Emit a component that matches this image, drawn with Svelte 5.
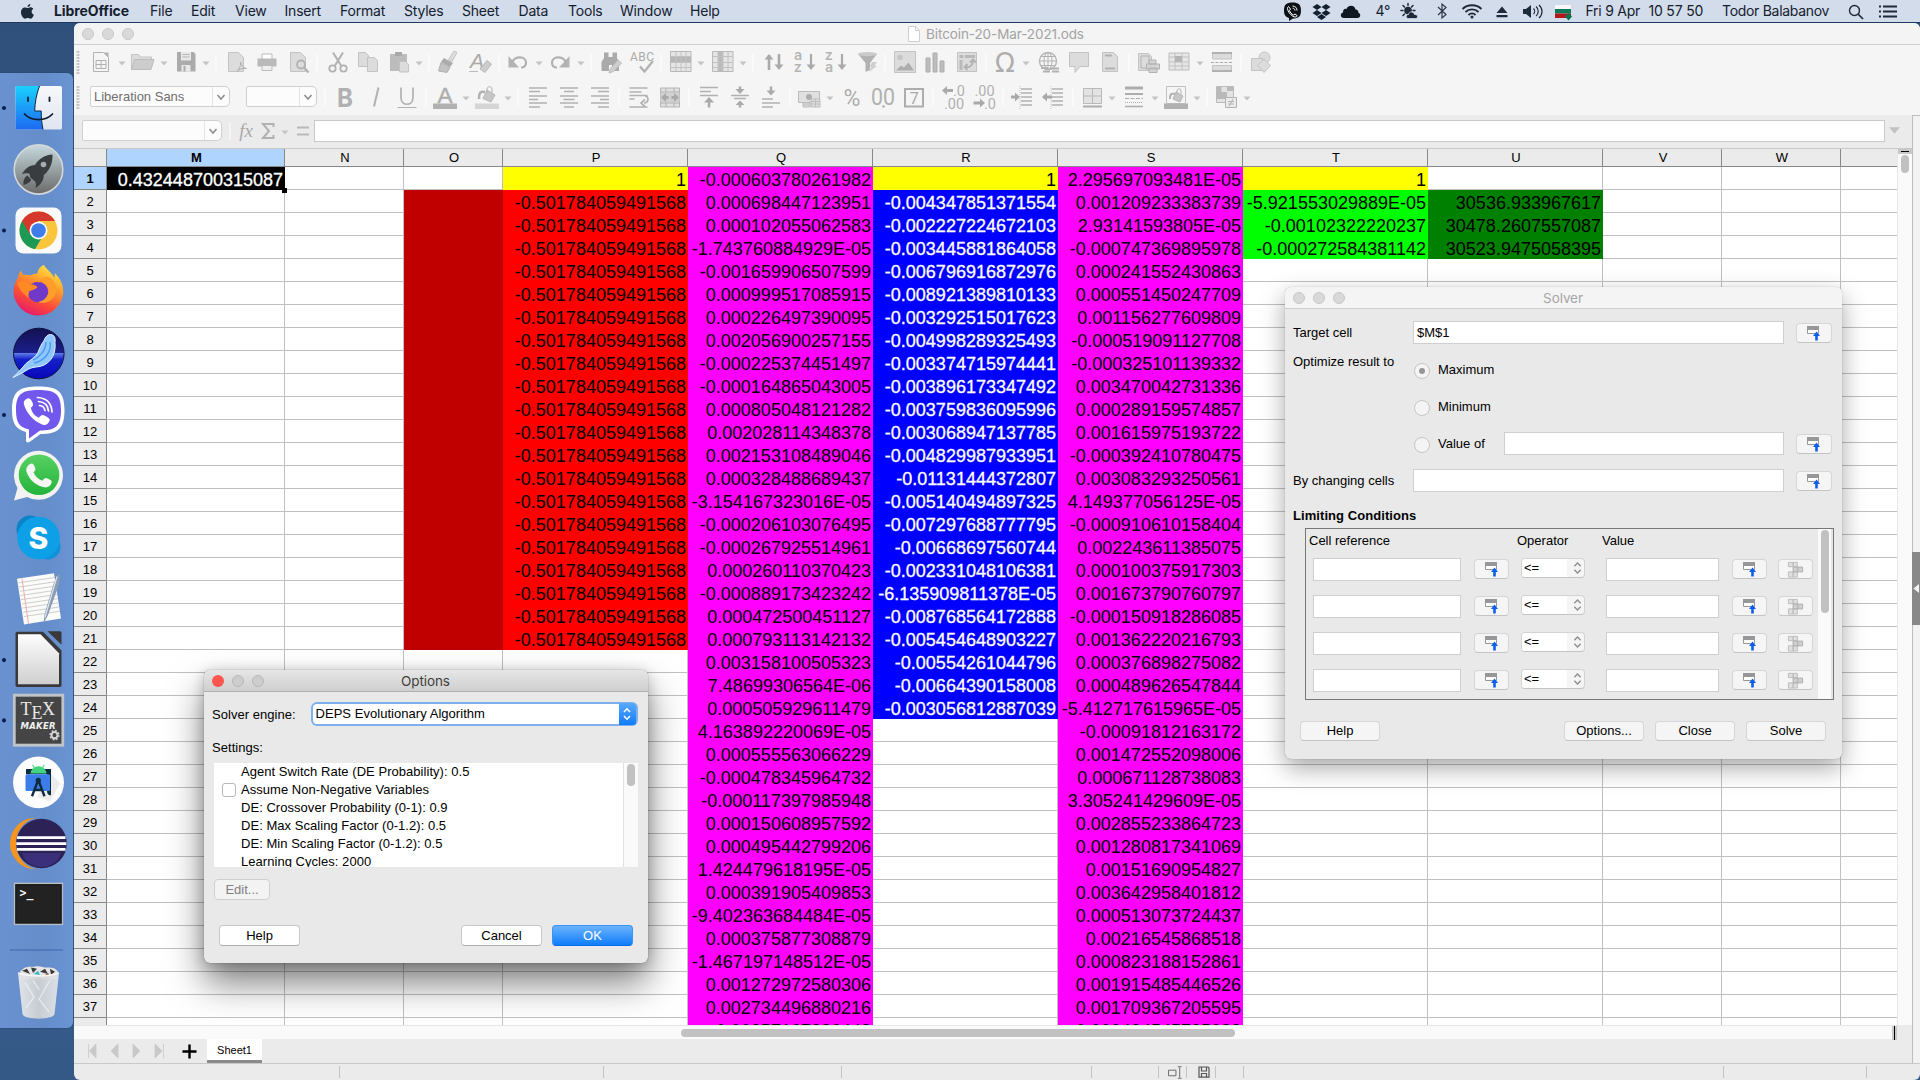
<script>
  // ---------- Menu bar ----------
  const menus = [
    ['File', 41], ['Edit', 44], ['View', 49.5], ['Insert', 55.5], ['Format', 64], ['Styles', 58],
    ['Sheet', 56.5], ['Data', 49.5], ['Tools', 52], ['Window', 70], ['Help', 40]
  ];

  // ---------- Dock: each entry is a slot [top, bottom, running indicator y, artwork, vertical scale] ----------
  const tall = 1.0523;
  const dock = [
    [73, 138, 108, `<defs><linearGradient id="fb" x1="0" y1="0" x2="0" y2="1"><stop offset="0" stop-color="#1ad0fd"/><stop offset="1" stop-color="#1d6af2"/></linearGradient><linearGradient id="fw" x1="0" y1="0" x2="0" y2="1"><stop offset="0" stop-color="#f7f8fb"/><stop offset="1" stop-color="#dfe6f0"/></linearGradient></defs><rect x="15.500" y="86" width="46.500" height="43.500" rx="1.500" fill="url(#fw)"/><path d="M17 86h22.500c-3 8-4.500 16-4.800 25h6.500c0 7 .5 12 1.800 18.500H17a1.500 1.500 0 0 1-1.500-1.500V87.500A1.500 1.500 0 0 1 17 86z" fill="url(#fb)"/><path d="M39.500 86c-3 8-4.500 16-4.800 25h6.500c0 7 .5 12 1.800 18.500" fill="none" stroke="#10263f" stroke-width="1"/><path d="M28 97.500v3.500M49.500 97.500v3.500" stroke="#0d1b2c" stroke-width="1.800" stroke-linecap="round"/><path d="M24.500 114c7 7.500 21 7.500 28 0" fill="none" stroke="#0d1b2c" stroke-width="1.700" stroke-linecap="round"/>`],
    [138, 200, 0, `<defs><linearGradient id="lp" x1="0" y1="0" x2="0" y2="1"><stop offset="0" stop-color="#c5d9de"/><stop offset="1" stop-color="#6b6a69"/></linearGradient></defs><ellipse cx="38.500" cy="169.500" rx="24.300" ry="24.600" fill="url(#lp)" stroke="#d3d7d9" stroke-width="1.600"/><path d="M52.500 154.500c-8 .5-14 4.500-17.500 10.500-4 .2-8.500 1.500-13 9 3-.8 5-1 7.500-.2l.8 3.700 4.500 3.800c2 3 1.200 4.800.5 6.700 6-3.500 8.500-8 8.500-13 6-4.500 9-12 8.700-20.500z" fill="#3a3d40"/><circle cx="43.500" cy="164.500" r="2.800" fill="#a5adb0"/><path d="M27.500 175.500c-3 1.500-4.500 5-4 9.500 3.500-1 6.300-2.500 7.800-5z" fill="#3a3d40"/>`],
    [200, 259, 230.5, `<rect x="15.500" y="207.500" width="46" height="46" rx="8" fill="#fafafa"/><circle cx="38.500" cy="230.500" r="19" fill="#fbc43d"/><path d="M38.500 230.500L22 221a19 19 0 0 0 13 28.200l8-13.500z" fill="#1c9a55"/><path d="M38.500 221h16.500a19 19 0 0 0-33 0l8.500 14z" fill="#d5382c"/><circle cx="38.500" cy="230.500" r="9" fill="#fff"/><circle cx="38.500" cy="230.500" r="7.300" fill="#3f7de8"/>`],
    [259, 322, 0, `<defs><linearGradient id="ff" x1=".8" y1="0" x2=".3" y2="1"><stop offset="0" stop-color="#fff04a"/><stop offset=".35" stop-color="#ffa02c"/><stop offset=".7" stop-color="#fb4a38"/><stop offset="1" stop-color="#e51a6d"/></linearGradient></defs><path d="M44 265c2 4 8 7.500 10.500 13 .5-2 .2-3.500 0-5 6 5 9 12.500 8.800 19.500A25 25 0 0 1 13.500 293c0-6 1.500-11.500 4.500-15.500.3-3 1.300-5 3-7 .5 2 1.500 3.500 3 4.500 2-.3 4-.2 6 .6 2-1.500 5-2.300 7.500-2.200.2-3.500 2.500-7 6.500-8.400z" fill="url(#ff)"/><circle cx="38" cy="292" r="10.300" fill="#7139ca"/><path d="M17.500 283c5-3 8-1.500 12 1.500 3 0 5.500 0 8 2.500-2 3-6 3-8.500 4.500 0 2-1 4-.5 6.500-5-4-10-9-11-15z" fill="#ff8a24"/><path d="M38 283c4-3 9-1 10.500 4 1.500 7-3 14-10.500 15 8 3 17-2 18-11 .7-6-2-12-8-14-5-1-9 2-10 6z" fill="#ff9d2b"/>`],
    [322, 384, 0, `<defs><linearGradient id="sm" x1="0" y1="0" x2="0" y2="1"><stop offset="0" stop-color="#13104f"/><stop offset=".48" stop-color="#1b1f8c"/><stop offset=".5" stop-color="#5b78e8"/><stop offset=".62" stop-color="#1420c8"/><stop offset="1" stop-color="#0707b8"/></linearGradient></defs><circle cx="38.800" cy="353.500" r="25.300" fill="url(#sm)" stroke="#0e1240"/><path d="M50.500 334.500c4.500.5 5 4 4.500 8 1.500 14-7 24-19 24.500-6 .5-9 3-13 5.500l-10 5c5-5 9-9 13-14 5-4 9-6 11.500-10 2-5 3.500-9 6-12 1.500-3 3-7 7-7z" fill="#8fc6fb" stroke="#e3f2ff" stroke-width="1"/><path d="M50 342c2 10-6 19-16 21M46 342c0 8-6 15-13 18" stroke="#4c9af2" stroke-width="1.500" fill="none"/>`],
    [384, 446, 415, `<path d="M38.500 386.500c18 0 26 4 26 23.500s-7 24-24 24l-11 8c-2 1-3.500.5-3.500-2v-8c-10-3-14-8-14-22 0-19.500 8-23.500 26.500-23.500z" fill="#fff"/><path d="M38.500 390c15.500 0 22.500 3 22.500 20s-6.500 20.500-21 20.500l-11 8v-9c-9.500-2-13-7-13-19.500 0-17 7-20 22.500-20z" fill="#7257ec"/><path d="M26.500 399c2.500-1.500 4-.5 6 3.500 1.300 2.600.3 3.700-1.700 5.300 1 4.500 3.500 8 8 10 2.500-3 3.500-3.500 6.500-1.800 3.500 2 5 3 4.300 4.800-1.500 3.700-4.600 5-7.600 3.700-9-4-15.500-11.500-18-20-.7-2.500.2-4.200 2.500-5.500z" fill="#fff"/><path d="M37.500 397.500c9 .5 14 6 14.500 14.500M38.500 401.500c6 .5 9.500 4 10 9.500M39.500 405.500c3.200.3 5 2 5.400 5" fill="none" stroke="#fff" stroke-width="1.700" stroke-linecap="round"/>`],
    [446, 508, 0, `<defs><linearGradient id="wa" x1="0" y1="0" x2="0" y2="1"><stop offset="0" stop-color="#57d163"/><stop offset="1" stop-color="#23b33a"/></linearGradient></defs><path d="M14 500.500l3.500-12.500a24.500 24.500 0 1 1 9.500 9z" fill="#f2f2ef"/><circle cx="39" cy="474.800" r="20.300" fill="url(#wa)"/><path d="M30 464c2.500-1.500 3.500 0 5 3.500 1 2.300 0 3.200-1.500 5 2 4 4.500 6.500 8.800 8.300 2.500-3 3-3.500 5.800-2 3.500 1.700 4 2.500 3.500 4-1.300 4-4.500 5.300-8.500 4.300-9-2.500-15-9-16.800-16-.6-3 1.200-5.600 3.700-7.100z" fill="#f6f6f4"/>`],
    [508, 565.8, 0, `<circle cx="30" cy="529" r="13.500" fill="#0a83c9"/><circle cx="48" cy="547" r="12.500" fill="#0f91dc"/><circle cx="38.500" cy="538" r="21.300" fill="#0ea0e6"/><text x="38.500" y="549.500" font-family="Inter" font-weight="800" font-size="30" fill="#fff" text-anchor="middle">S</text>`],
    [564, 623, 0, `<path d="M17 576l37-5 7 43-37 5.500z" fill="#fbfbf9"/><path d="M18.500 580l36-5M19 584l36-5M20 588l36-5M20.500 592l36-5M21 596l36-5M22 600l36-5M22.500 604l36-5M23 608l36-5M24 612l36-5" stroke="#c3c3c3" stroke-width=".8"/><path d="M22 576l6.500 43" stroke="#f0a6a6" stroke-width=".9"/><path d="M58 571.500l2 1-1 9-11 29-4.500 8.500 1-9 9-29z" fill="#8b9cb0"/><path d="M57 574l-9 29-3 10" stroke="#dbe5ee" stroke-width="1.200" fill="none"/>`, tall],
    [623, 683, 653.5, `<defs><linearGradient id="lo" x1="0" y1="0" x2="0" y2="1"><stop offset="0" stop-color="#fdfdfd"/><stop offset="1" stop-color="#cfcfcf"/></linearGradient></defs><path d="M17 626.500h26l18.500 18v33a1.500 1.500 0 0 1-1.500 1.500H17a1.500 1.500 0 0 1-1.500-1.500V628a1.500 1.500 0 0 1 1.500-1.500z" fill="#39393b"/><path d="M18 629h22.500l18.500 18V676.500H18z" fill="url(#lo)"/><path d="M47.500 626H60a1.500 1.500 0 0 1 1.500 1.500v11.500z" fill="#39393b"/>`, tall],
    [683, 740, 711, `<rect x="14.300" y="687" width="48.500" height="47.500" fill="#454545" stroke="#bfc4c8" stroke-width="2.800"/><text font-family="Liberation Serif" fill="#e8e8e8"><tspan x="20.500" y="705.500" font-size="18">T</tspan><tspan x="31.500" y="710" font-size="18">E</tspan><tspan x="42" y="705.500" font-size="18">X</tspan></text><text x="38" y="719.500" font-family="DejaVu Sans" font-weight="700" font-style="oblique" font-size="8.500" fill="#f2f2f2" text-anchor="middle" textLength="35">MAKER</text><circle cx="54.500" cy="725" r="3" fill="none" stroke="#d4d4d4" stroke-width="2"/><circle cx="54.500" cy="725" r="4.300" fill="none" stroke="#d4d4d4" stroke-width="1.600" stroke-dasharray="1.700 1.680"/>`, tall],
    [740, 799, 0, `<ellipse cx="38.500" cy="769.800" rx="25.500" ry="24.500" fill="#fdfdfd"/><path d="M47 757l13 14-10 17-12-4z" fill="#ececec"/><path d="M26 757h25v25c-4 0-4-3-4-6V762H26z" fill="#0d2c3f"/><rect x="25.500" y="762" width="24.500" height="16" rx="1.500" fill="#3b7de9"/><path d="M30.500 761.500a8 7 0 0 1 16 0z" fill="#41d380"/><path d="M32.500 753l2 3M44.500 753l-2 3" stroke="#41d380" stroke-width="1"/><path d="M38 768l-6 15M38.500 768l6 15M34 777h9" stroke="#0d2c3f" stroke-width="2.400" fill="none"/><circle cx="38.300" cy="768" r="2.600" fill="#0d2c3f"/>`, tall],
    [799, 859, 0, `<path d="M36 803.500A25 25 0 0 0 36 852.500A25.500 24.500 0 0 1 10 828A25.500 24.500 0 0 1 36 803.500z" fill="#f7941e"/><ellipse cx="41.500" cy="828" rx="25.300" ry="23.500" fill="#2c2255"/><path d="M22 837h39a20 17 0 0 1-39 0z" fill="#42338a" opacity=".7"/><path d="M17 822.300h48.500M16.300 828h50M17 833.500h48.500" stroke="#fff" stroke-width="2.600"/>`, tall],
    [859, 915, 0, `<rect x="14.500" y="866" width="48" height="39" fill="#191919" stroke="#b9bec2" stroke-width="1.300"/><rect x="16.500" y="868" width="44" height="35" fill="#222"/><text x="19.500" y="878.500" font-family="DejaVu Sans Mono" font-weight="700" font-size="11.500" fill="#f5f5f5">&gt;_</text>`, tall],
    [915, 1003, 0, `<defs><linearGradient id="tr" x1="0" y1="0" x2="1" y2="0"><stop offset="0" stop-color="#e9ebee"/><stop offset=".5" stop-color="#cfd1d4"/><stop offset="1" stop-color="#e4e6ea"/></linearGradient></defs><path d="M10 929.300h53" stroke="#3a67ad" stroke-width="1"/><path d="M20 950c6-7 11-4 15-5 6-1 8 1 12 1s8 0 11 4l-2 7H23z" fill="#e4e4e4"/><path d="M22 949l5-2 3 5zM31 946l6 1-4 4zM40 950l5-3 3 5zM50 947l5 3-4 3z" fill="#37393c"/><path d="M34 952l4-3 2 4z" fill="#35b6c9"/><path d="M45 953l3-2 2 3z" fill="#b0512c"/><path d="M18 951c12 4 29 4 41 0l-4.500 39c-1 6-31 6-32 0z" fill="url(#tr)" opacity=".93"/><path d="M18 951c12 4 29 4 41 0" fill="none" stroke="#f7f7f7" stroke-width="1.300"/><path d="M25 960l9 14-8 10M50 958l-11 18 10 12M33 958l6 9" stroke="#f5f5f5" stroke-width="1.200" fill="none" opacity=".7"/>`, tall]
  ];

  // ---------- Toolbar glyphs, drawn in a 24 x 24 box ----------
  const s = 'fill="none" stroke="#b1b1b1"';
  const pale = 'fill="#dcdcdc" stroke="#c3c3c3" stroke-width="1"';
  const glyphs = {
    grip: `<path d="M12 1v23" stroke="#c6c6c6" stroke-width="3" stroke-dasharray="2 1"/>`,
    arrow: `<path d="M8.500 11.500h7l-3.500 4z" fill="#c4c4c4"/>`,
    sep: `<path d="M12 4v17" stroke="#fff" stroke-width="1"/>`,
    doc: `<path d="M4.500 2.500h10l5 5v14h-15z" ${s}/><path d="M15 2.500h4.500v5z" fill="#b1b1b1"/><path d="M7 10.500h10v8H7zM7 14.500h10M12 10.500v8" ${s}/>`,
    folder: `<path d="M.5 19.500v-15h7l2 2.500h11v3" ${pale}/><path d="M.5 19.500l3-10h19.500l-3 10z" fill="#cdcdcd" stroke="#bdbdbd"/>`,
    save: `<path d="M3 2h16.500l2 2v17.500H3z" fill="#ababab"/><path d="M7 2h10v8.500H7z" fill="#e8e8e8"/><path d="M8.500 4.500h7M8.500 7h7" stroke="#b5b5b5"/><path d="M7.500 15h9v6.500h-9z" fill="#e8e8e8"/><path d="M9.500 16h2v5.500h-2z" fill="#ababab"/>`,
    pdf: `<path d="M3.500 2.500h10l5 5v14h-15z" ${pale}/><path d="M12 21c3-3 4-6 3.500-9 1 4 3 6 6 6.500-4-.5-7 .5-9.500 2.500z" ${s}/>`,
    print: `<path d="M7 4h10v6H7z" fill="#fff" stroke="#bbb"/><path d="M2.500 8.500h19v8h-19z" fill="#b9b9b9"/><path d="M7 15.500h10v5H7z" fill="#eee" stroke="#bbb"/>`,
    preview: `<path d="M3.500 2.500h10l5 5v14h-15z" ${pale}/><circle cx="14" cy="14.500" r="4" ${s} stroke-width="1.800"/><path d="M17 17.500l4.500 5" ${s} stroke-width="2.200"/>`,
    cut: `<path d="M7 2.500l8 13M17 2.500l-8 13" ${s} stroke-width="2"/><circle cx="6.500" cy="18.500" r="3.200" ${s} stroke-width="1.800"/><circle cx="17.500" cy="18.500" r="3.200" ${s} stroke-width="1.800"/>`,
    copy: `<path d="M2.500 2.500h7l3 3v11h-10z" ${pale}/><path d="M11.500 7.500h7l3 3v11h-10z" ${pale}/>`,
    paste: `<path d="M3 4h17v17H3z" fill="#bcbcbc"/><path d="M8 2h7v4H8z" fill="#a9a9a9"/><path d="M12.500 11.500h6l3 3v7.500h-9z" ${pale}/>`,
    brush: `<path d="M19 1l3 1.500-5 9-3.500-2z" ${pale}/><path d="M9 8l9 5-3 4-9-5z" fill="#ababab"/><path d="M6 12.500l9 5-3 5L3.500 21z" fill="#c3c3c3" stroke="#b1b1b1"/>`,
    clear: `<text x="2" y="18" font-family="Liberation Sans" font-size="21" font-style="italic" fill="#aaa">A</text><path d="M1 21.500h9" stroke="#bbb"/><path d="M19 10.500l4.500 3.500-6.500 8.500-5-3.500z" fill="#ccc" stroke="#b9b9b9"/>`,
    undo: `<path d="M2.500 6v11.500H13z" fill="#b3b3b3"/><path d="M6 12.500c3-7 14-6.500 14 0 0 3-2 5-5 5" ${s} stroke-width="2.200"/>`,
    redo: `<path d="M21.500 6v11.500H11z" fill="#b3b3b3"/><path d="M18 12.500c-3-7-14-6.500-14 0 0 3 2 5 5 5" ${s} stroke-width="2.200"/>`,
    find: `<path d="M5 2.500h4.500V7h4V2.500H18V8l2 4v9h-7v-6h-3v6H2.500v-9L5 8z" fill="#aaa"/><path d="M19 10l3.500 3-8 8.500-4.500 1.500 1.500-4.500z" fill="#cfcfcf" stroke="#bcbcbc"/>`,
    spell: `<text x="12" y="10.500" font-family="Roboto" font-size="12" fill="#aaa" text-anchor="middle" textLength="24">ABC</text><path d="M10 16.500l4.500 5L23 11" ${s} stroke-width="2.300"/>`,
    row: `<path d="M1.500 1.500h20.500v20H1.500z" fill="#e5e5e5" stroke="#b9b9b9"/><path d="M2 6.500h20v5.500H2z" fill="#b7b7b7"/><path d="M2 6.500h20M2 12.500h20M2 17.500h20M7 2v19M12 2v19M17 2v19" stroke="#c2c2c2"/>`,
    col: `<path d="M1.500 1.500h20.500v20H1.500z" fill="#e5e5e5" stroke="#b9b9b9"/><path d="M7 2h5v19H7z" fill="#bababa"/><path d="M2 6.500h20M2 12.500h20M2 17.500h20M7 2v19M12 2v19M17 2v19" stroke="#c2c2c2"/>`,
    sort: `<path d="M7 5v15M17 4v14" stroke="#aaa" stroke-width="2.600"/><path d="M2.500 9.500L7 4l4.500 5.500zM12.500 14.500L17 20l4.500-5.500z" fill="#aaa"/>`,
    az: `<text font-family="Roboto" font-size="15" font-weight="500" fill="#b4b4b4"><tspan x="0" y="10">a</tspan><tspan x="0" y="22">z</tspan></text><path d="M17 4v14" stroke="#aaa" stroke-width="2.200"/><path d="M12.500 14.500L17 20l4.500-5.500z" fill="#aaa"/>`,
    za: `<text font-family="Roboto" font-size="15" font-weight="500" fill="#b4b4b4"><tspan x="0" y="10">z</tspan><tspan x="0" y="22">a</tspan></text><path d="M17 4v14" stroke="#aaa" stroke-width="2.200"/><path d="M12.500 14.500L17 20l4.500-5.500z" fill="#aaa"/>`,
    filter: `<path d="M2 4h19l-7 9v7l-4.500 2v-9z" fill="#b2b2b2"/><ellipse cx="11.500" cy="4" rx="9.500" ry="2" fill="#cbcbcb"/><path d="M16 12h5l-2.500 4h2.500l-8 6 2.500-5h-2z" fill="#cfcfcf"/>`,
    image: `<path d="M1.500 1.500h21v21h-21z" ${pale}/><circle cx="7" cy="7.500" r="2.800" fill="#c6c6c6"/><path d="M3 20.500l5-5 3 2 4.500-5 5.500 8z" fill="#adadad"/>`,
    chart: `<path d="M3 8h4v14H3zM10 3h4v19h-4zM17 11h4v11h-4z" fill="#bdbdbd" stroke="#adadad"/>`,
    pivot: `<path d="M2.500 2.500h19v19h-19z" ${pale}/><path d="M4.500 5h4v3h-4zM10 5h10v3H10zM4.500 10h3v10h-3z" fill="#b9b9b9"/><path d="M10 17c5 1 8-2 8-6M12.500 14l-3 3 3 3M15 12.500l3-3 3 3" ${s} stroke-width="1.800"/>`,
    omega: `<text x="12" y="22" font-family="DejaVu Sans" font-size="26" fill="#adadad" text-anchor="middle">Ω</text>`,
    globe: `<circle cx="11" cy="11" r="8.500" ${s} stroke-width="1.300"/><path d="M2.500 11h17M4.500 6.500h13M4.500 15.500h13M11 2.500v17" ${s}/><ellipse cx="11" cy="11" rx="4" ry="8.500" ${s}/><path d="M4 18h7M13 18.500h9M6 21.500h7M15 21.500h7" stroke="#b1b1b1" stroke-width="1.800"/>`,
    comment: `<path d="M2.500 2.500h19v14H13l-5 6v-6H2.500z" ${pale}/>`,
    hf: `<path d="M4.500 2.500h11l4 4v15h-15z" ${pale}/><path d="M7 5.500h7M7 18.500h10" stroke="#b1b1b1" stroke-width="1.800"/>`,
    parea: `<path d="M1.500 3.500h10l3 3v14h-13z" ${pale}/><path d="M4 6h8v12H4z" ${s}/><path d="M12 10h7v4h-7zM9.500 14h13v5h-13zM12 18h8v4.500h-8z" fill="#d4d4d4" stroke="#b1b1b1"/>`,
    freeze: `<path d="M2 3h20v17H2z" fill="#e6e6e6" stroke="#bbb"/><path d="M2 7h20M2 12h20M2 16h20M8 3v17M15 3v17" stroke="#c1c1c1"/><path d="M8 6h7v6H8z" fill="#b5b5b5"/>`,
    split: `<path d="M2.500 2.500h19V9h-19zM2.500 15.500h19v6h-19z" ${pale}/><path d="M2 3h20M2 21h20" stroke="#b1b1b1" stroke-width="2"/><path d="M1 12.500h22" stroke="#a9a9a9" stroke-dasharray="3 1.500"/>`,
    shapes: `<circle cx="15.500" cy="7.500" r="5.500" ${pale}/><path d="M2.500 8.500h11v12h-11z" ${pale}/><path d="M15 9l6.500 6.500-6.500 7-6.500-7z" ${pale}/>`,
    bold: `<text x="12" y="21.500" font-family="Inter" font-weight="700" font-size="26" fill="#b1b1b1" text-anchor="middle" textLength="16" lengthAdjust="spacingAndGlyphs">B</text>`,
    italic: `<path d="M14.500 2.500l-4.500 19" ${s} stroke-width="2"/>`,
    under: `<path d="M6 2.500v10c0 9 12 9 12 0v-10" ${s} stroke-width="1.700"/><path d="M2.500 22.500h19" stroke="#b1b1b1" stroke-width="1.200"/>`,
    color: `<text x="12" y="17.500" font-family="Liberation Sans" font-size="22.500" fill="#aeaeae" stroke="#aeaeae" stroke-width=".5" text-anchor="middle">A</text><path d="M0 18.500h24v5.500H0z" fill="#b1b1b1"/>`,
    high: `<path d="M4 14c0-7 2-8 6-7" ${s} stroke-width="2.500"/><path d="M12 5l8 5-4 7-8-3.500z" fill="#c6c6c6" stroke="#b6b6b6"/><path d="M12 8V4c0-3 5-3 5 0v4" ${s}/><path d="M0 18.500h24v5.500H0z" fill="#d5d5d5"/>`,
    left: `<path d="M3 3h18M3 6.500h11M3 11h18M3 14.500h9M3 18h18M3 22h11" ${s} stroke-width="1.300"/>`,
    center: `<path d="M3 3h18M7 6.500h10M3 11h18M6.500 14.500h11M3 18h18M7 22h10" ${s} stroke-width="1.300"/>`,
    right: `<path d="M3 3h18M10 6.500h11M3 11h18M12 14.500h9M3 18h18M10 22h11" ${s} stroke-width="1.300"/>`,
    wrap: `<path d="M2.500 3h18M2.500 7h12M2.500 10.500h18M2.500 14h5M2.500 22h18" ${s} stroke-width="1.300"/><path d="M18 11c4 0 4 7-1 7M18 14.500L14 18l4 3.500" ${s} stroke-width="1.700"/>`,
    merge: `<path d="M2.500 3h19v19h-19z" fill="#e0e0e0" stroke="#b5b5b5"/><path d="M2.500 7h19M2.500 18h19M8 3v4M16 3v4M8 18v4M16 18v4" ${s}/><path d="M2.500 8h19v9h-19z" fill="#d0d0d0"/><path d="M3 12.500l5-4.500v3h2.500v3H8v3zM21 12.500l-5-4.500v3h-2.500v3H16v3z" fill="#a9a9a9"/>`,
    top: `<path d="M3 2.500h18M3 6.500h11M3 10.500h18" ${s} stroke-width="1.400"/><path d="M12 16v6.500" stroke="#aaa" stroke-width="2.500"/><path d="M7 17.500l5-5.500 5 5.500z" fill="#aaa"/>`,
    mid: `<path d="M3 10.500h18M6 13.500h12" ${s} stroke-width="1.400"/><path d="M12 1.500V5M12 19v3.500" stroke="#aaa" stroke-width="2.500"/><path d="M7.500 4l4.500 5 4.500-5zM7.500 20l4.500-4.500 4.500 4.500z" fill="#aaa"/>`,
    bottom: `<path d="M3 14h11M3 18h18M3 22h11" ${s} stroke-width="1.400"/><path d="M12 1.500V7" stroke="#aaa" stroke-width="2.500"/><path d="M7.500 5.500l4.500 5 4.500-5z" fill="#aaa"/>`,
    money: `<path d="M1.500 6.500h21v11h-21z" fill="#e0e0e0" stroke="#bababa"/><circle cx="12" cy="12" r="3" fill="#adadad"/><path d="M14 14h9v8h-9zM6 18h7v4H6z" fill="#dedede" stroke="#bdbdbd"/><path d="M14 16.500h9M14 19h9M18.500 14v8M6 20h7" stroke="#bdbdbd"/>`,
    percent: `<text x="12" y="20.500" font-family="Roboto" font-size="23" fill="#adadad" text-anchor="middle">%</text>`,
    number: `<text x="12" y="20" font-family="Roboto" font-size="23" fill="#b1b1b1" text-anchor="middle" textLength="24" lengthAdjust="spacingAndGlyphs">00</text><circle cx="12.500" cy="21.500" r="1.200" fill="#aaa"/>`,
    date: `<path d="M3 4h18v17.500H3z" fill="none" stroke="#adadad" stroke-width="2"/><text x="12.300" y="18.500" font-family="Roboto" font-size="16" fill="#a9a9a9" text-anchor="middle">7</text>`,
    addDec: `<path d="M0 5.500L5 1v3h6v3H5v3z" fill="#aaa"/><text font-family="Roboto" font-size="14.500" fill="#b1b1b1"><tspan x="11" y="10.500">.0</tspan><tspan x="2" y="23.500">.00</tspan></text>`,
    delDec: `<path d="M12 18l-5-4.500v3H.5v3H7v3z" fill="#aaa"/><text font-family="Roboto" font-size="14.500" fill="#b1b1b1"><tspan x="1.500" y="10.500">.00</tspan><tspan x="11" y="23.500">.0</tspan></text>`,
    indent: `<path d="M10 1v23" stroke="#c4c4c4" stroke-dasharray="1 1"/><path d="M11 4h11M11 8h11M11 12h11M11 16h11M11 20h11" ${s} stroke-width="1.300"/><path d="M10 12L5 7.500v3H1v3h4v3z" fill="#a9a9a9"/>`,
    outdent: `<path d="M10 1v23" stroke="#c4c4c4" stroke-dasharray="1 1"/><path d="M11 4h11M11 8h11M11 12h11M11 16h11M11 20h11" ${s} stroke-width="1.300"/><path d="M1 12l5-4.500v3h5v3H6v3z" fill="#a9a9a9"/>`,
    borders: `<path d="M3.500 3.500h18v15h-18z" fill="#e3e3e3" stroke="#b9b9b9"/><path d="M12.500 3.500v15M3.500 11h18" stroke="#b9b9b9"/><path d="M3 21.500h19" stroke="#adadad" stroke-width="2.200"/>`,
    style: `<path d="M3 3h18" stroke="#adadad" stroke-width="3"/><path d="M3 9h18" stroke="#adadad" stroke-width="2"/><path d="M3 13.500h18" stroke="#adadad" stroke-dasharray="4 1.500"/><path d="M3 17.500h18" stroke="#adadad" stroke-dasharray="1 1"/><path d="M3 21.500h18" stroke="#adadad" stroke-width="1.300"/>`,
    bcolor: `<path d="M2.500 1.500h19v17h-19z" fill="none" stroke="#c1c1c1"/><path d="M6 14c0-5 1-6 5-5" ${s} stroke-width="2"/><path d="M12 7l7 4-3 6-7-3z" fill="#c6c6c6" stroke="#b6b6b6"/><path d="M13 9V6c0-3 4-3 4 0v3" ${s}/><path d="M0 18.500h24v5.500H0z" fill="#b1b1b1"/>`,
    cond: `<path d="M2.500 1.500h17v16h-17z" fill="#e3e3e3" stroke="#bbb"/><path d="M2.500 2h5v12h-5zM13 2h6v4h-6zM7 7h6v7H7z" fill="#b9b9b9"/><path d="M11.500 12.500h11v10h-11z" fill="#ececec" stroke="#b1b1b1"/><path d="M14 16.500h6M14 19h6M19 14l-4 7.500" ${s}/>`,
    equals: `<path d="M6 8.500h12M6 15.500h12" stroke="#b9b9b9" stroke-width="2"/>`,
    fx: `<text x="12" y="17.500" font-family="Liberation Serif" font-style="italic" font-size="19" fill="#a9a9a9" text-anchor="middle">fx</text>`,
    sigma: `<path d="M17.500 8V5H7l6 7-6 7h10.500V16" ${s} stroke-width="2"/>`
  };

  // Positions are the horizontal centres of every toolbar control.
  const standard = [
    ['grip', 78], ['doc', 101], ['arrow', 122], ['folder', 143], ['arrow', 163.5], ['save', 185.5], ['arrow', 205.5], ['sep', 215.5],
    ['pdf', 237], ['print', 267], ['preview', 299], ['sep', 316.5], ['cut', 337.5], ['copy', 368], ['paste', 399], ['arrow', 418.5], ['sep', 428.5],
    ['brush', 447], ['clear', 480], ['sep', 498.5], ['undo', 518], ['arrow', 539], ['redo', 560], ['arrow', 581], ['sep', 590.5],
    ['find', 611], ['spell', 642], ['sep', 660.5], ['row', 680.5], ['arrow', 700.5], ['col', 722.5], ['arrow', 742.5], ['sep', 752.5],
    ['sort', 773.5], ['az', 806], ['za', 837], ['filter', 867.5], ['sep', 884.5], ['image', 905], ['chart', 935], ['pivot', 967], ['sep', 985.5],
    ['omega', 1005], ['arrow', 1026], ['globe', 1048.5], ['comment', 1079], ['hf', 1110], ['sep', 1128.5], ['parea', 1148.5], ['freeze', 1179],
    ['arrow', 1199.5], ['split', 1222], ['sep', 1240.5], ['shapes', 1261]
  ];
  const formatting = [
    ['sep', 324.5], ['bold', 345], ['italic', 376], ['under', 407], ['sep', 425.5], ['color', 445], ['arrow', 466], ['high', 487], ['arrow', 507.5],
    ['sep', 517.5], ['left', 538], ['center', 569], ['right', 600], ['sep', 618.5], ['wrap', 639], ['merge', 670], ['sep', 688.5], ['top', 709],
    ['mid', 740], ['bottom', 771], ['sep', 789.5], ['money', 809], ['arrow', 829.5], ['percent', 852], ['number', 883], ['date', 914], ['sep', 932.5],
    ['addDec', 954], ['delDec', 985], ['sep', 1002.5], ['indent', 1022], ['outdent', 1053], ['sep', 1072.5], ['borders', 1091.5], ['arrow', 1112],
    ['style', 1134], ['arrow', 1154.5], ['bcolor', 1176], ['arrow', 1196.5], ['sep', 1206.5], ['cond', 1226], ['arrow', 1246.5]
  ];
  const formulaTools = [['sep', 229.5], ['fx', 246], ['sigma', 267.5], ['arrow', 284.5], ['equals', 303]];

  // Turns centres into slot widths so that the controls flow from the given start.
  function slots(list, start) {
    let edge = start;
    return list.map(([name, c], i) => {
      const end = i + 1 < list.length ? (c + list[i + 1][1]) / 2 : c + 11;
      const slot = { name, width: end - edge, shift: c - edge };
      edge = end;
      return slot;
    });
  }

  // ---------- Sheet ----------
  const cols = [
    ['M', 178], ['N', 119], ['O', 99], ['P', 185], ['Q', 185], ['R', 185], ['S', 185], ['T', 185], ['U', 175], ['V', 119], ['W', 119], ['', 119]
  ];
  const q = ['-0.000603780261982', '0.000698447123951', '0.000102055062583', '-1.743760884929E-05', '-0.00165990650' + '7599', '0.000999517085915', '0.000226497390095', '0.002056900257155', '-0.000225374451497', '-0.000164865043005', '0.000805048121282', '0.002028114348378', '0.002153108489046', '0.000328488689437', '-3.154167323016E-05', '-0.000206103076495', '-0.000267925514961', '0.000260110370423', '-0.000889173423242', '0.000472500451127', '0.000793113142132', '0.003158100505323', '7.48699306564E-06', '0.000505929611479', '4.163892220069E-05', '0.000555563066229', '-0.000478345964732', '-0.000117397985948', '0.000150608957592', '0.000495442799206', '1.424479618195E-05', '0.000391905409853', '-9.402363684484E-05', '0.000375877308879', '-1.467197148512E-05', '0.001272972580306', '0.002734496880216', '0.00357167286448'];
  const r = ['1', '-0.004347851371554', '-0.002227224672103', '-0.003445881864058', '-0.006796916872976', '-0.008921389810133', '-0.003292515017623', '-0.004998289325493', '-0.003374715974441', '-0.003896173347492', '-0.003759836095996', '-0.003068947137785', '-0.004829987933951', '-0.01131444372807', '-0.005140494897325', '-0.007297688777795', '-0.00668697560744', '-0.002331048106381', '-6.135909811378E-05', '-0.008768564172888', '-0.005454648903227', '-0.00554261044796', '-0.00664390158008', '-0.003056812887039'];
  const sv = ['2.295697093481E-05', '0.001209233383739', '2.93141593805E-05', '-0.000747369895978', '0.000241552430863', '0.000551450247709', '0.001156277609809', '-0.000519091127708', '-0.000325101139332', '0.003470042731336', '0.000289159574857', '0.001615975193722', '-0.000392410780475', '0.003083293250561', '4.149377056125E-05', '-0.000910610158404', '0.002243611385075', '0.000100375917303', '0.001673790760797', '-0.000150918286085', '0.001362220216793', '0.000376898275082', '0.000489626547844', '-5.412717615965E-05', '-0.00091812163172', '0.001472552098006', '0.000671128738083', '3.305241429609E-05', '0.002855233864723', '0.001280817341069', '0.00151690954827', '0.003642958401812', '0.000513073724437', '0.00216545868518', '0.000823188152861', '0.001915485446526', '0.001709367205595', '0.000434545725083'];
  const t = ['1', '-5.921553029889E-05', '-0.00102322220237', '-0.000272584381142'];
  const u = ['', '30536.933967617', '30478.2607557087', '30523.9475058395'];

  function cell(name, i) {
    if (name === 'M' && i === 0) return ['0.432448700315087', 'black'];
    if (name === 'O' && i > 0 && i < 21) return ['', 'maroon'];
    if (name === 'P' && i < 21) return i === 0 ? ['1', 'yellow'] : ['-0.501784059491568', 'red'];
    if (name === 'Q') return [q[i], 'magenta'];
    if (name === 'R' && i < 24) return [r[i], i === 0 ? 'yellow' : 'blue'];
    if (name === 'S') return [sv[i], 'magenta'];
    if (name === 'T' && i < 4) return [t[i], i === 0 ? 'yellow' : 'lime'];
    if (name === 'U' && i > 0 && i < 4) return [u[i], 'green'];
    return ['', ''];
  }
  const rows = Array.from({ length: 38 }, (_, i) => i);

  const statusFields = [266, 264, 238, 250, 67, 28, 29, 28, 480, 143];

  const settings = [
    'Agent Switch Rate (DE Probability): 0.5', 'Assume Non-Negative Variables', 'DE: Crossover Probability (0-1): 0.9',
    'DE: Max Scaling Factor (0-1.2): 0.5', 'DE: Min Scaling Factor (0-1.2): 0.5', 'Learning Cycles: 2000'
  ];
</script>

{#snippet tools(list, start)}
  {#each slots(list, start) as slot}
    <span class="slot" style:width="{slot.width}px">
      <svg class="tool" viewBox="0 0 24 24" style:margin-left="{slot.shift - 12}px">{@html glyphs[slot.name]}</svg>
    </span>
  {/each}
{/snippet}

{#snippet chevron()}
  <svg class="chev" viewBox="0 0 10 10"><path d="M1.500 3l3.500 4 3.500-4" fill="none" stroke="#8c8c8c" stroke-width="1.500" /></svg>
{/snippet}

{#snippet shrink()}
  <button class="pick" aria-label="Shrink">
    <svg viewBox="0 0 16 16"><path d="M1.500 1.500h11v7h-11z" fill="#fff" stroke="#97979a" /><path d="M1 1h12v4H1z" fill="#97979a" /><path d="M9.200 15.500v-4.500H7L10.500 6.500 14 11h-2.200v4.500z" fill="#0a5fee" /></svg>
  </button>
{/snippet}

<div class="desktop">
  <header class="menubar">
    <svg class="apple" viewBox="0 0 16 18"><path d="M11 1c.1 1.700-1.400 3.300-3 3.300C7.800 2.600 9.400 1.100 11 1zM8 5.300c.7 0 1.800-.9 3.200-.9 1 0 2.200.5 3 1.700-2.700 1.600-2.200 5.300.6 6.300-.7 2-2.100 4.300-3.600 4.300-1.200 0-1.500-.7-2.900-.7s-1.900.7-3 .7C3.300 16.700 1 12.900 1 9.900c0-3.300 2.100-5.200 4.200-5.200 1.200 0 2.200.6 2.800.6z" fill="#1d2a3a" /></svg>
    <b class="app">LibreOffice</b>
    {#each menus as [label, width]}
      <span class="menu" style:width="{width}px">{label}</span>
    {/each}
    <div class="tray">
      <svg class="i" style:width="29px" viewBox="0 0 29 20"><path d="M14.500 1.500c6 0 8.500 2 8.500 8s-2.500 8-8 8l-4 2.500v-3C7.500 16 6 14 6 9.500c0-6 2.500-8 8.500-8z" fill="#0c1118" /><path d="M10.500 5.500l2 2.500-1 1.500c.7 2 2 3.500 4 4.500l1.500-1 2.200 1.700c-1 2-3 1.300-4.200.6-3-1.800-5-4.600-5.500-7.500-.2-1 .3-1.700 1-2.300zM14.500 5c3 .2 4.500 2 4.500 4.500M14.700 7.200c1.400.1 2.200 1 2.300 2.300" fill="none" stroke="#fff" stroke-width="1" /></svg>
      <svg class="i" style:width="29px" viewBox="0 0 29 20"><path d="M10 3l4.500 3-4.500 3-4.500-3zM19 3l4.500 3-4.500 3-4.500-3zM10 9l4.500 3-4.500 3-4.500-3zM19 9l4.500 3-4.500 3-4.500-3zM14.500 13l4.500 3-4.500 3-4.500-3z" fill="#13202f" /></svg>
      <svg class="i" style:width="31px" viewBox="0 0 31 20"><path d="M8 17c-4 0-4-5-1-5.500C7 8 9 7.500 10.500 8 12 3.500 19 3.500 19.500 8.500c2.500 0 3 2 3 3.500 2.500.5 2.500 5-1 5z" fill="#0e1722" /></svg>
      <span class="temp">4°</span>
      <svg class="i" style:width="36px" viewBox="0 0 36 20"><circle cx="16" cy="9.500" r="3.800" fill="#1d2a3a" /><path d="M16 2.500v2M16 14.500v2M9 9.500h2M21 9.500h2M11 4.500l1.500 1.500M21 4.500l-1.500 1.500M11 14.500l1.500-1.500" stroke="#1d2a3a" stroke-width="1.500" stroke-linecap="round" /><path d="M16.500 17.500c-3 0-3-4 0-4 .5-3.500 5-3.500 6 0 4-.5 4 4 1 4z" fill="#1d2a3a" stroke="#d2dcea" stroke-width=".8" /></svg>
      <svg class="i" style:width="28px" viewBox="0 0 28 20"><path d="M10 6l8 7.500-4 3.500V3l4 3.500L10 14" fill="none" stroke="#2a3848" stroke-width="1.200" /></svg>
      <svg class="i" style:width="32px" viewBox="0 0 32 20"><g fill="none" stroke="#1d2a3a" stroke-width="1.900"><path d="M6.500 8c5-5 14-5 19 0M9.500 11c3.500-3.500 9.500-3.500 13 0M12.500 14c2-2 5-2 7 0" /></g><circle cx="16" cy="16" r="1.500" fill="#1d2a3a" /></svg>
      <svg class="i" style:width="28px" viewBox="0 0 28 20"><path d="M8.500 12L14 5.500 19.500 12zM8.500 14h11v2.300h-11z" fill="#1d2a3a" /></svg>
      <svg class="i" style:width="33px" viewBox="0 0 33 20"><path d="M7 8h3l5-4v13l-5-4H7z" fill="#1d2a3a" /><path d="M17.500 7.500c1.500 1.500 1.500 4 0 5.500M20 5.500c3 2.500 3 7 0 9.500M23 4c4 3.500 4 9.500 0 13" fill="none" stroke="#1d2a3a" stroke-width="1.200" /></svg>
      <svg class="i" style:width="30px" viewBox="0 0 30 20"><path d="M6 4h16v4.500H6z" fill="#f7f7f7" /><path d="M6 8h16v4.500H6z" fill="#0b7a5a" /><path d="M6 12.500h16V17H6z" fill="#b3161b" /><path d="M19.500 12l3.500 3.500-3.500 4-3.500-4z" fill="#08734f" /></svg>
      <span class="date">Fri 9 Apr</span>
      <span class="clock">10 57 50</span>
      <span class="user">Todor Balabanov</span>
      <svg class="i" style:width="32px" viewBox="0 0 32 20"><circle cx="14.500" cy="9.500" r="5" fill="none" stroke="#1d2a3a" stroke-width="1.400" /><path d="M18 13l5 5" stroke="#1d2a3a" stroke-width="1.700" /></svg>
      <svg class="i" style:width="32px" viewBox="0 0 32 20"><path d="M11 5.500h14M11 10.500h14M11 15.500h14" stroke="#1d2a3a" stroke-width="2" /><path d="M7 5.500h2M7 10.500h2M7 15.500h2" stroke="#1d2a3a" stroke-width="2" /></svg>
    </div>
  </header>

  <div class="stage">
    <aside class="side">
      <nav class="dock">
        {#each dock as [top, bottom, dot, art, scale = 1]}
          <svg class="dockitem" preserveAspectRatio="none" viewBox="0 {top} 73 {bottom - top}" style:height="{(bottom - top) * scale}px">
            {#if dot}<circle cx="4" cy={dot} r="2" fill="#0a1c50" />{/if}
            {@html art}
          </svg>
        {/each}
      </nav>
    </aside>

    <main class="window">
      <div class="titlebar">
        <i class="light"></i><i class="light"></i><i class="light"></i>
        <div class="title">
          <svg viewBox="0 0 12 16"><path d="M.5.500h7l4 4v11H.5z" fill="#fff" stroke="#cfcfcf" /><path d="M7.500.500v4h4" fill="none" stroke="#cfcfcf" /></svg>
          Bitcoin-20-Mar-2021.ods
        </div>
      </div>
      <div class="toolbars">
        <div class="bar first">{@render tools(standard, 74)}</div>
        <div class="bar">
          <span class="slot gripslot"><svg class="tool" viewBox="0 0 24 24">{@html glyphs.grip}</svg></span>
          <div class="combo font"><span>Liberation Sans</span>{@render chevron()}</div>
          <div class="combo size"><span></span>{@render chevron()}</div>
          {@render tools(formatting, 317)}
        </div>
      </div>
      <div class="lower">
        <div class="content">
          <div class="formula">
            <div class="combo name"><span></span>{@render chevron()}</div>
            {@render tools(formulaTools, 222)}
            <div class="input"></div>
            <svg class="drop" viewBox="0 0 14 10"><path d="M1 1.500h12L7 8.500z" fill="#c2c2c2" /></svg>
          </div>
          <div class="gridwrap">
            <div class="sheet">
              <div class="row head">
                <span class="rh"></span>
                {#each cols as [name, width]}
                  <span class="ch" class:sel={name === 'M'} style:width="{width}px">{name}</span>
                {/each}
              </div>
              {#each rows as i}
                <div class="row">
                  <span class="rh" class:sel={i === 0}>{i + 1}</span>
                  {#each cols as [name, width]}
                    {@const [value, tone] = cell(name, i)}
                    <span class="cell {tone}" style:width="{width}px">{value}{#if tone === 'black'}<i class="handle"></i>{/if}</span>
                  {/each}
                </div>
              {/each}
            </div>
            <div class="vscroll"><i class="splitter"></i><i class="thumb"></i></div>
          </div>
          <div class="hscroll"><i class="thumb"></i><i class="splitter"></i></div>
          <div class="tabs">
            <svg class="nav" viewBox="0 0 90 18"><path d="M1.500 2v14M9 2v14L2.500 9zM31 2v14L24 9zM46 2v14l7-7zM68 2v14l7-7zM76.500 2v14" fill="#c9c9c9" stroke="#c9c9c9" stroke-width=".8" /></svg>
            <svg class="plus" viewBox="0 0 16 16"><path d="M8 .500v15M.5 8h15" stroke="#000" stroke-width="2.600" /></svg>
            <div class="tab">Sheet1</div>
          </div>
        </div>
        <div class="deck"><div class="decktab"><svg viewBox="0 0 6 10"><path d="M6 0v9L.5 4.500z" fill="#f4f4f4" /></svg></div></div>
      </div>
      <div class="status">
        {#each statusFields as width, i}
          <span class="field" style:width="{width}px">
            {#if i === 5}
              <svg viewBox="0 0 18 14"><path d="M1.500 4.500h8v6h-8zM13.500 1.500v11M11.500.800h4M11.500 13.200h4" fill="none" stroke="#666" /></svg>
            {:else if i === 6}
              <svg class="disk" viewBox="0 0 12 12"><path d="M1 1h9l1 1v9.200H1zM3.500 1v4h5V1M3.500 11V7.500h5V11" fill="none" stroke="#555" stroke-width="1.200" /></svg>
            {/if}
          </span>
        {/each}
      </div>
    </main>
  </div>

  <section class="dialog solver">
    <div class="dtitle"><i class="light"></i><i class="light"></i><i class="light"></i><span>Solver</span></div>
    <div class="form">
      <div class="frow"><span class="lab">Target cell</span><div class="box">$M$1</div>{@render shrink()}</div>
      <div class="frow"><span class="lab raise">Optimize result to</span><i class="radio on"></i><span class="rl">Maximum</span></div>
      <div class="frow"><span class="lab"></span><i class="radio"></i><span class="rl">Minimum</span></div>
      <div class="frow"><span class="lab"></span><i class="radio"></i><span class="rl vo">Value of</span><div class="box"></div>{@render shrink()}</div>
      <div class="frow"><span class="lab">By changing cells</span><div class="box"></div>{@render shrink()}</div>
    </div>
    <h4>Limiting Conditions</h4>
    <div class="conds">
      <div class="clist">
        <div class="chead"><span>Cell reference</span><span>Operator</span><span>Value</span></div>
        {#each [0, 1, 2, 3] as _}
          <div class="crow">
            <div class="box ref"></div>{@render shrink()}
            <div class="op"><span>&lt;=</span><svg viewBox="0 0 10 14"><path d="M1.500 5L5 1.500 8.500 5M1.500 9L5 12.500 8.500 9" fill="none" stroke="#8c8c8c" stroke-width="1.500" /></svg></div>
            <div class="box val"></div>{@render shrink()}
            <button class="pick del" aria-label="Remove"><svg viewBox="0 0 18 18"><path d="M1.500 1.500h5v4.500h-5zM6.500 1.500h4.500v4.500H6.500zM1.500 11.500h5V17h-5zM6.500 11.500h4.500V17H6.500z" fill="#dfdfdf" stroke="#bcbcbc" /><path d="M6.500 6.500h10v5h-10zM11.500 6.500v5" fill="#cfcfcf" stroke="#aaa" /></svg></button>
          </div>
        {/each}
      </div>
      <div class="cscroll"><i></i></div>
    </div>
    <div class="actions">
      <button class="help">Help</button><button>Options...</button><button>Close</button><button>Solve</button>
    </div>
  </section>

  <section class="dialog options">
    <div class="dtitle"><i class="light red"></i><i class="light"></i><i class="light"></i><span>Options</span></div>
    <div class="engine"><span>Solver engine:</span>
      <div class="select"><span>DEPS Evolutionary Algorithm</span><div class="stepper"><svg viewBox="0 0 10 14"><path d="M2 5l3-3.200L8 5M2 9l3 3.200L8 9" fill="none" stroke="#fff" stroke-width="1.500" /></svg></div></div>
    </div>
    <div class="setlabel">Settings:</div>
    <div class="list">
      <div class="items">
        {#each settings as item, i}
          <div class="item"><i class:check={i === 1}></i><span>{item}</span></div>
        {/each}
      </div>
      <div class="lscroll"><i></i></div>
    </div>
    <button class="edit">Edit...</button>
    <div class="oactions"><button class="help">Help</button><button>Cancel</button><button class="ok">OK</button></div>
  </section>
</div>

<style>
  :global(body) { margin: 0; overflow: hidden; }
  * { box-sizing: border-box; }
  .desktop {
    position: relative; width: 1920px; height: 1080px; overflow: hidden; display: flex; flex-direction: column;
    background: linear-gradient(#2e4f78, #3a6094 50%, #355987 100%);
    font-family: "Liberation Sans", Arial, sans-serif; font-size: 13px; color: #000;
  }
  .menubar {
    height: 23px; flex: none; display: flex; align-items: center; white-space: nowrap; padding-left: 20px;
    background: #d2dcea; border-bottom: 1px solid #1f3a5e; font: 14px/22px Inter, Roboto, sans-serif; letter-spacing: -0.2px; color: #15202e;
  }
  .apple { width: 15px; height: 17px; flex: none; }
  .app { width: 96px; margin-left: 19px; flex: none; font-size: 14px; letter-spacing: -0.1px; }
  .menu { flex: none; }
  .tray { margin-left: auto; display: flex; align-items: center; padding-right: 16px; }
  .i { height: 20px; flex: none; }
  .temp { width: 16px; margin-left: 9px; }
  .date { width: 63px; margin-left: 7px; letter-spacing: -0.25px; }
  .clock { width: 73.5px; }
  .user { width: 118px; letter-spacing: -0.3px; }

  .stage { flex: 1; display: flex; min-height: 0; }
  .side { width: 74px; flex: none; padding-top: 50px; }
  .dock {
    width: 73px; height: 955px; display: flex; flex-direction: column; border-radius: 0 6px 6px 0;
    background: linear-gradient(90deg, #6a92d0, #648dca 60%, #6a94d2); box-shadow: 0 0 2px #24436d;
  }
  .dockitem { width: 73px; flex: none; display: block; }

  .window { flex: 1; min-width: 0; display: flex; flex-direction: column; background: #ebebeb; border-radius: 6px; overflow: hidden; }
  .titlebar { height: 22px; flex: none; display: flex; align-items: center; background: #f4f4f4; border-bottom: 1px solid #cfcfcf; padding-left: 8px; }
  .light { width: 12px; height: 12px; border-radius: 50%; background: #d9d9d9; border: 1px solid #c7c7c7; margin-right: 8px; flex: none; }
  .title { flex: 1; display: flex; justify-content: center; align-items: center; gap: 6px; font: 13.5px Inter, sans-serif; letter-spacing: -0.1px; color: #a3a3a3; padding-right: 70px; }
  .title svg { width: 12px; height: 16px; }
  .toolbars { height: 70px; flex: none; background: #f5f5f5; }
  .bar { height: 35px; display: flex; align-items: center; }
  .bar.first { height: 34px; }
  .slot { flex: none; height: 24px; display: block; }
  .tool { display: block; width: 24px; height: 24px; overflow: visible; }
  .gripslot { width: 16px; margin-left: -8px; margin-right: 8px; }
  .combo { display: flex; align-items: center; height: 21px; background: #fcfcfc; border: 1px solid #d0d0d0; border-radius: 2px 5px 5px 2px; flex: none; color: #6e6e6e; }
  .combo span { flex: 1; padding-left: 3px; height: 19px; line-height: 19px; border-right: 1px solid #e4e4e4; }
  .chev { width: 10px; height: 10px; margin: 0 3px; }
  .font { width: 140px; margin-right: 16px; }
  .size { width: 71px; }
  .lower { flex: 1; min-height: 0; display: flex; }
  .content { width: 1838px; flex: none; display: flex; flex-direction: column; }
  .formula { height: 34px; flex: none; display: flex; align-items: center; padding: 0 0 2px 8px; border-bottom: 1px solid #c9c9c9; }
  .name { width: 140px; }
  .input { width: 1571px; height: 22px; background: #fff; border: 1px solid #c9c9c9; }
  .drop { width: 13px; height: 9px; margin-left: 3px; }
  .gridwrap { height: 876px; flex: none; display: flex; }
  .sheet { width: 1823px; overflow: hidden; background: #fff; }
  .row { display: flex; height: 23px; width: 1900px; }
  .head { height: 18px; }
  .rh, .ch { flex: none; text-align: center; background: #ebebeb; border-right: 1px solid #888; border-bottom: 1px solid #888; overflow: hidden; line-height: 17px; }
  .ch { padding-left: 2px; }
  .rh { width: 33px; line-height: 23px; }
  .sel { background: #afd4fd; font-weight: 700; }
  .cell { flex: none; position: relative; text-align: right; font-size: 18px; line-height: 26px; padding-right: 1px; border-right: 1px solid #c0c0c0; border-bottom: 1px solid #c0c0c0; white-space: nowrap; }
  .black, .maroon, .yellow, .red, .magenta, .blue, .lime, .green { border: 0; padding-right: 2px; }
  .black { background: #000; color: #fff; -webkit-text-stroke: .3px #fff; }
  .maroon { background: #c00000; }
  .yellow { background: #ff0; }
  .red { background: #f00; }
  .magenta { background: #f0f; }
  .blue { background: #00f; color: #fff; -webkit-text-stroke: .3px #fff; }
  .lime { background: #0f0; }
  .green { background: #008000; }
  .handle { position: absolute; right: -2px; bottom: -3px; width: 5px; height: 5px; background: #000; z-index: 1; }
  .vscroll { width: 15px; background: #fafafa; border-left: 1px solid #e6e6e6; display: flex; flex-direction: column; align-items: center; }
  .vscroll .splitter { width: 14px; height: 5px; flex: none; background: linear-gradient(90deg, #c9c9c9 3px, transparent 3px, transparent 11px, #c9c9c9 11px), linear-gradient(#c9c9c9 2px, #000 2px, #000 3px, #c9c9c9 3px); }
  .vscroll .thumb { width: 8px; height: 18px; border-radius: 4px; background: #c1c1c1; margin-top: 1px; }
  .hscroll { height: 14px; flex: none; width: 1823px; display: flex; align-items: center; background: #fafafa; border-top: 1px solid #e6e6e6; padding-left: 607px; }
  .hscroll .thumb { width: 554px; height: 8px; border-radius: 4px; background: #c1c1c1; }
  .hscroll .splitter { width: 5px; height: 14px; margin-left: auto; background: linear-gradient(90deg, #c9c9c9 2px, #000 2px, #000 3px, #c9c9c9 3px); }
  .tabs { flex: 1; display: flex; align-items: center; padding-left: 13px; }
  .nav { width: 90px; height: 18px; }
  .plus { width: 15px; height: 15px; margin: 0 18px 0 5px; }
  .tab { width: 55px; height: 24px; background: #fff; border-bottom: 3px solid #8a8a8a; margin-left: -8px; text-align: center; font: 11px/22px "Liberation Sans", sans-serif; }
  .deck { width: 8px; border-left: 1px solid #bdbdbd; border-top: 1px solid #bdbdbd; background: #f2f2f2; padding-top: 436px; }
  .decktab { height: 73px; margin-left: -1px; background: #888; display: flex; align-items: center; }
  .decktab svg { width: 6px; height: 10px; margin-left: 1px; }
  .status { height: 17px; flex: none; border-top: 1px solid #c9c9c9; display: flex; padding-top: 2px; }
  .field { height: 12px; flex: none; border-right: 1px solid #c4c4c4; display: flex; align-items: center; justify-content: center; padding-left: 6px; }
  .field svg { width: 17px; height: 13px; flex: none; }
  .field .disk { width: 12px; height: 12px; }

  .dialog { position: absolute; background: #e9e9e9; border-radius: 6px; }
  .dtitle { height: 22px; display: flex; align-items: center; padding-left: 8px; border-bottom: 1px solid #cfcfcf; background: #f4f4f4; border-radius: 6px 6px 0 0; font: 13.5px Inter, sans-serif; letter-spacing: -0.1px; color: #a6a6a6; }
  .dtitle span { flex: 1; text-align: center; padding-right: 69px; }
  button { font: 13px/18px "Liberation Sans", Arial, sans-serif; padding: 0; height: 20px; border: 1px solid #d6d6d6; border-bottom-color: #c4c4c4; border-radius: 4px; background: #f5f5f5; color: #000; }

  .solver { left: 1285px; top: 287px; width: 557px; height: 472px; box-shadow: 0 0 1px rgba(0, 0, 0, .45), 0 9px 24px rgba(0, 0, 0, .35); }
  .form { padding: 5px 10px 0 8px; }
  .frow { height: 37px; display: flex; align-items: center; }
  .lab { width: 120px; flex: none; }
  .raise { padding-bottom: 17px; }
  .box { height: 23px; line-height: 21px; background: #fff; border: 1px solid #cfcfcf; padding-left: 3px; flex: none; }
  .frow .box { flex: 1; }
  .frow .pick { margin-left: 12px; width: 36px; }
  .pick { width: 35px; flex: none; display: flex; align-items: center; justify-content: center; }
  .pick svg { width: 16px; height: 16px; }
  .pick.del svg { width: 17px; height: 17px; }
  .radio { width: 16px; height: 16px; border-radius: 50%; border: 1px solid #c6c6c6; background: #f4f4f4; margin: 2px 8px 0 1px; flex: none; display: flex; align-items: center; justify-content: center; }
  .radio.on::after { content: ""; width: 6px; height: 6px; border-radius: 50%; background: #959595; }
  .vo { width: 66px; flex: none; }
  h4 { margin: 9px 0 0 8px; font-size: 13px; line-height: 16px; letter-spacing: .07px; }
  .conds { margin: 4px 8px 0 20px; height: 172px; border: 1px solid #777; display: flex; }
  .clist { flex: 1; overflow: hidden; padding-left: 7px; }
  .chead { display: flex; height: 26px; line-height: 24px; margin-left: -4px; }
  .chead span:nth-child(1) { width: 208px; }
  .chead span:nth-child(2) { width: 85px; }
  .crow { height: 37px; display: flex; align-items: center; padding-bottom: 9px; }
  .crow .box { height: 23px; }
  .ref { width: 148px; margin-right: 13px; }
  .op { width: 64px; height: 20px; margin: 0 21px 2px 12px; display: flex; align-items: center; background: #f5f5f5; border: 1px solid #d3d3d3; border-bottom-color: #c4c4c4; border-radius: 4px; flex: none; overflow: hidden; }
  .op span { width: 45px; line-height: 18px; padding-left: 2px; background: #fff; }
  .op svg { width: 9px; height: 14px; margin-left: 6px; }
  .val { width: 113px; margin-right: 13px; }
  .del { margin-left: 11px; }
  .cscroll { width: 15px; background: #fafafa; border-right: 2px solid #e4e4e4; padding: 1px 0 0 3px; }
  .cscroll i { display: block; width: 8px; height: 83px; border-radius: 4px; background: #c1c1c1; }
  .actions { display: flex; padding: 21px 16px 0 15px; gap: 11px; }
  .actions button { width: 80px; }
  .actions .help { margin-right: auto; }

  .options { left: 204px; top: 670px; width: 444px; height: 293px; box-shadow: 0 0 1px rgba(0, 0, 0, .6), 0 20px 36px rgba(0, 0, 0, .5), 0 2px 14px rgba(0, 0, 0, .2); letter-spacing: .04px; }
  .options .dtitle { background: linear-gradient(#e6e6e6, #cfcfcf); border-bottom-color: #b0b0b0; color: #404040; }
  .options .light { background: #cdcdcd; border-color: #b7b7b7; }
  .options .light.red { background: #fc5650; border-color: #e0443e; }
  .engine { display: flex; align-items: center; padding: 10px 0 0 8px; height: 34px; }
  .engine > span { width: 100.5px; }
  .select { width: 323px; height: 20px; display: flex; background: #fff; border-radius: 4px; box-shadow: 0 0 0 2px #7db0ec; }
  .select > span { flex: 1; line-height: 19px; padding-left: 3px; }
  .stepper { width: 17px; background: linear-gradient(#5aaafc, #117bfb); border-radius: 0 3px 3px 0; display: flex; align-items: center; justify-content: center; margin: -1px 0; }
  .stepper svg { width: 10px; height: 14px; }
  .setlabel { margin: 14px 0 0 8px; line-height: 16px; }
  .list { margin: 7px 0 0 10px; width: 424px; height: 104px; background: #fff; display: flex; overflow: hidden; }
  .items { flex: 1; }
  .item { height: 18px; line-height: 18px; display: flex; align-items: center; }
  .item i { width: 14px; height: 14px; margin: 0 5px 0 8px; flex: none; }
  .item .check { border: 1px solid #b9b9b9; border-radius: 3px; }
  .lscroll { width: 15px; border-left: 1px solid #e2e2e2; background: #fafafa; padding: 1px 0 0 3px; }
  .lscroll i { display: block; width: 8px; height: 22px; border-radius: 4px; background: #c1c1c1; }
  .options button { background: #fff; height: 21px; border-color: #c8c8c8; border-bottom-color: #adadad; }
  .options .edit { display: block; width: 56px; margin: 12px 0 0 10px; background: #f3f3f3; border-color: #cfcfcf; color: #808080; }
  .oactions { display: flex; gap: 10px; padding: 25px 15px 0; }
  .oactions button { width: 81px; }
  .oactions .help { margin-right: auto; }
  .options .ok { background: linear-gradient(#6bb3fb, #0f7dfc); border-color: #3b93f7; border-bottom-color: #0a6be6; color: #fff; }
</style>
